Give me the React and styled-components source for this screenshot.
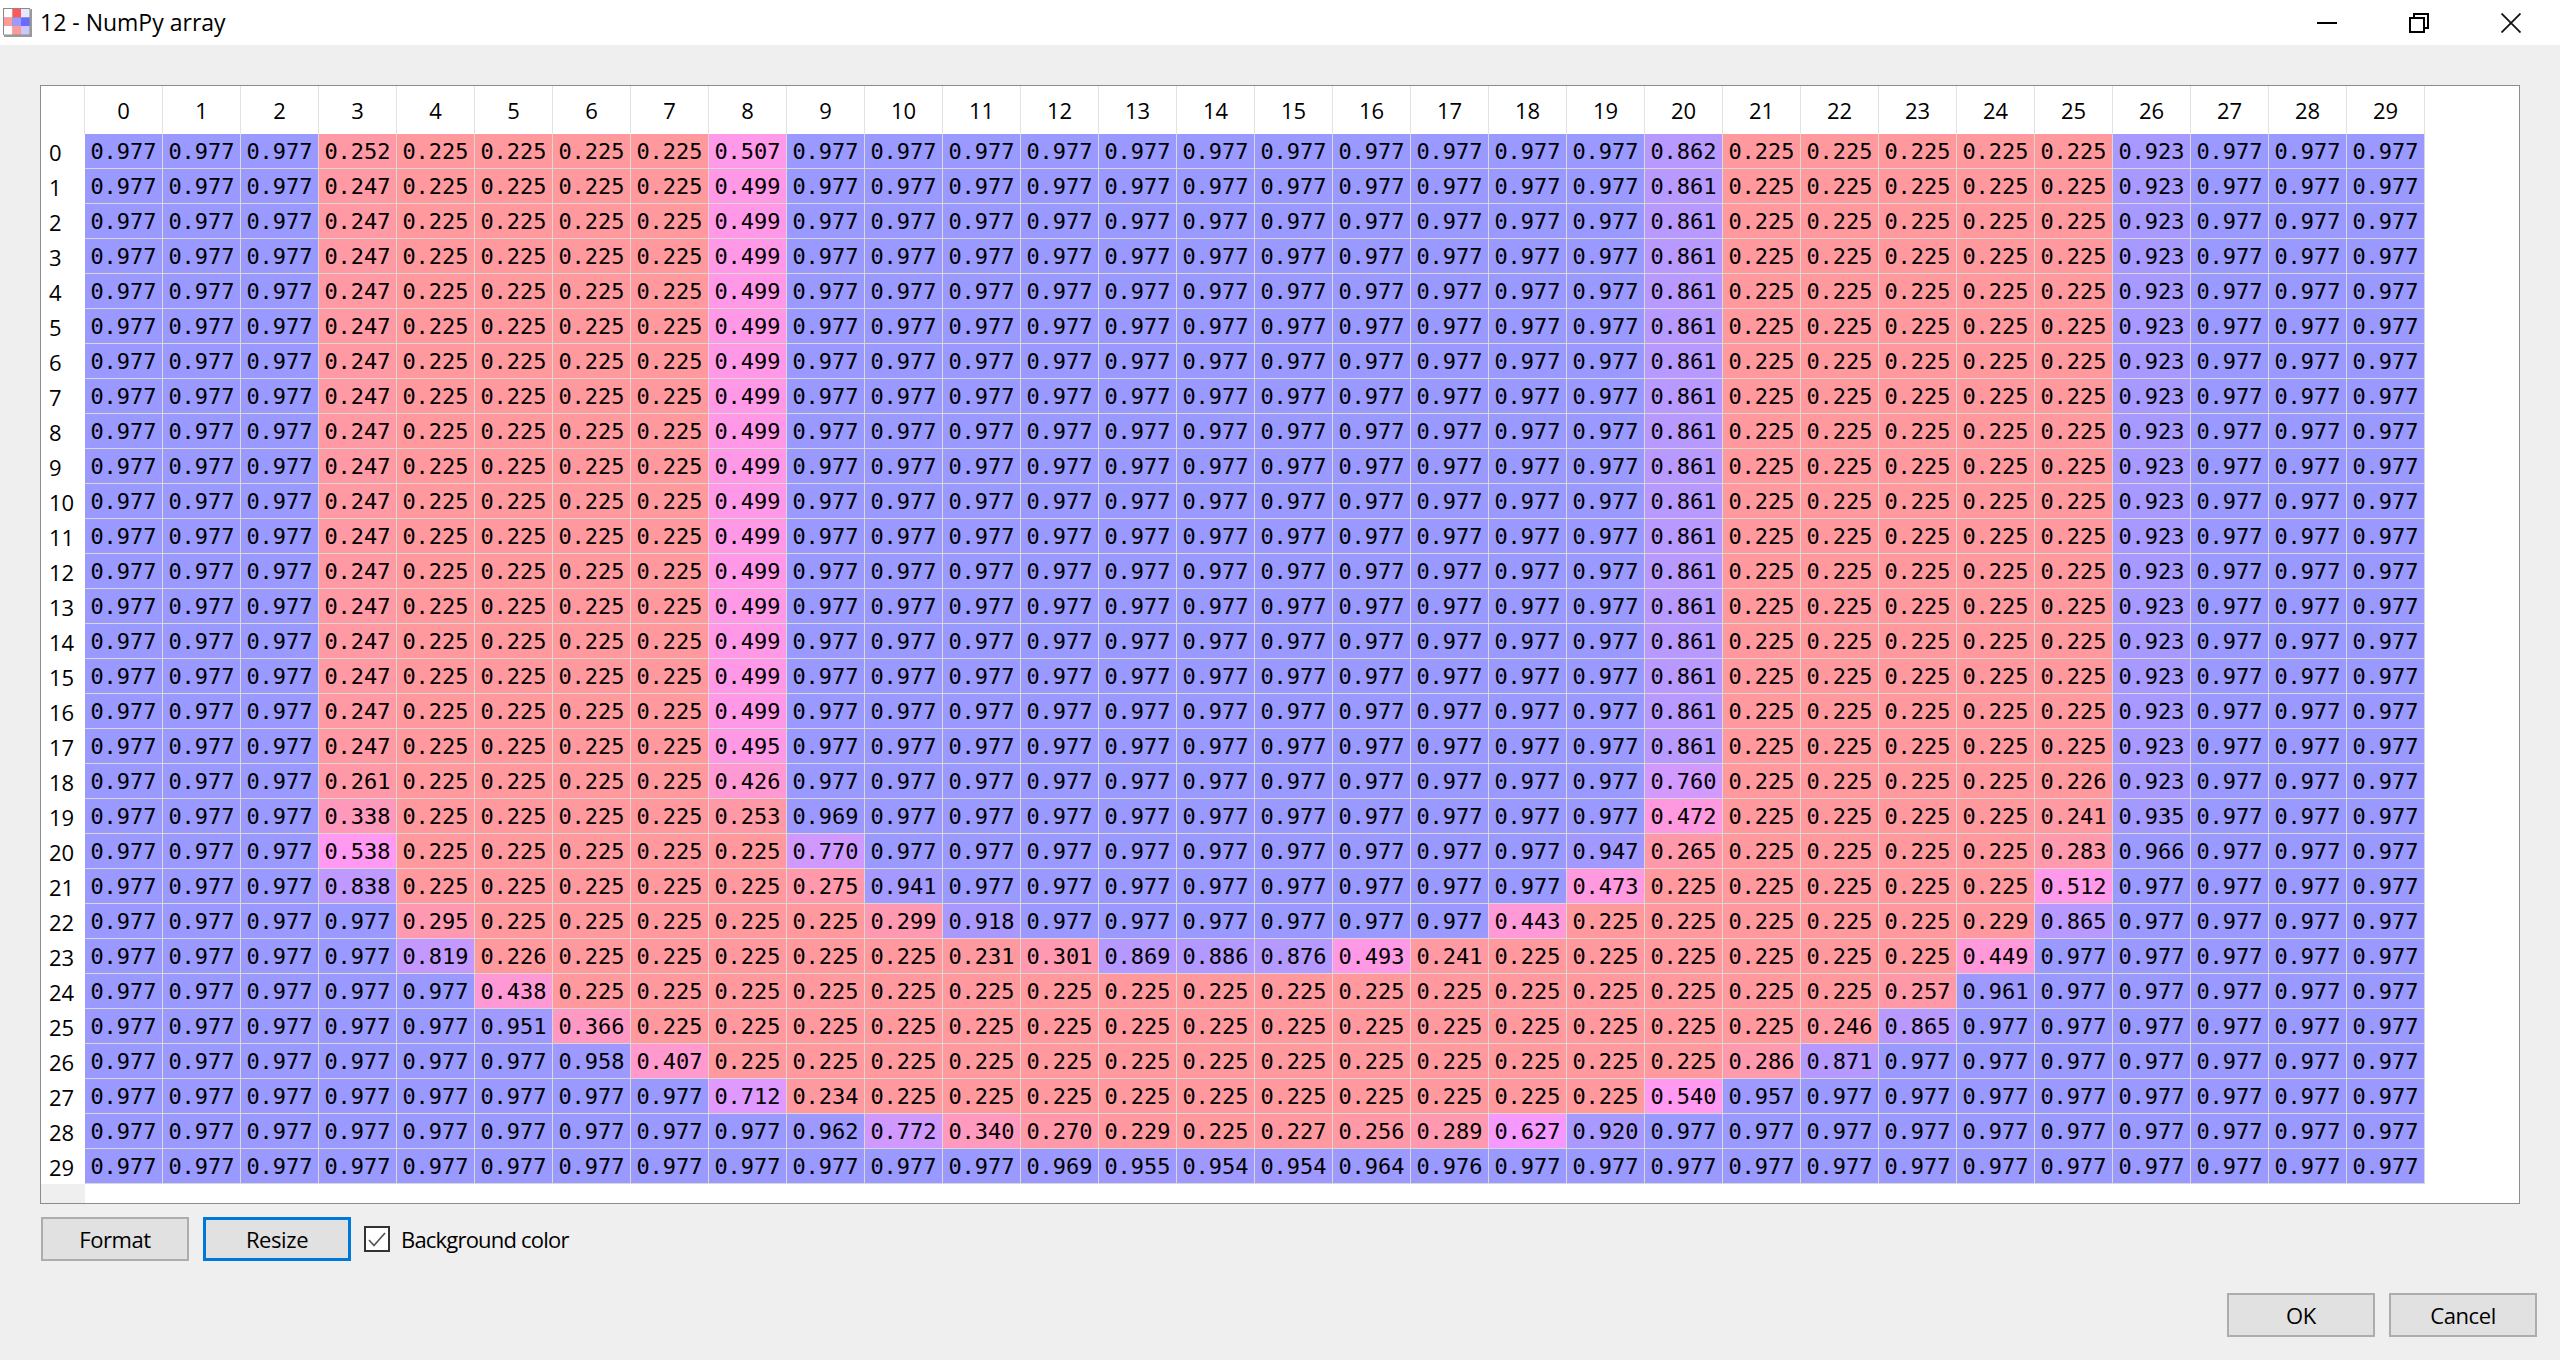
import React from "react";
import styled, { createGlobalStyle } from "styled-components";

// each row as "value*count" runs, values are thousandths
const ROWS_SOURCE = [
  "977*3 252 225*4 507 977*11 862 225*5 923 977*3",
  ...Array(16).fill("977*3 247 225*4 499 977*11 861 225*5 923 977*3"),
  "977*3 247 225*4 495 977*11 861 225*5 923 977*3",
  "977*3 261 225*4 426 977*11 760 225*4 226 923 977*3",
  "977*3 338 225*4 253 969 977*10 472 225*4 241 935 977*3",
  "977*3 538 225*5 770 977*9 947 265 225*4 283 966 977*3",
  "977*3 838 225*5 275 941 977*8 473 225*5 512 977*4",
  "977*4 295 225*5 299 918 977*6 443 225*5 229 865 977*4",
  "977*4 819 226 225*5 231 301 869 886 876 493 241 225*6 449 977*5",
  "977*5 438 225*17 257 961 977*5",
  "977*5 951 366 225*15 246 865 977*6",
  "977*6 958 407 225*13 286 871 977*7",
  "977*8 712 234 225*10 540 957 977*8",
  "977*9 962 772 340 270 229 225 227 256 289 627 920 977*10",
  "977*12 969 955 954 954 964 976 977*12",
];

const rows = ROWS_SOURCE.map((src) =>
  src.split(" ").flatMap((run) => {
    const [value, count = 1] = run.split("*");
    return Array(Number(count)).fill(Number(value));
  })
);

const columns = Array.from({ length: 30 }, (_, i) => i);

const GlobalStyle = createGlobalStyle`
  html, body {
    margin: 0;
    padding: 0;
    background: #efefef;
  }
  * {
    box-sizing: border-box;
  }
`;

const Window = styled.div`
  width: 2560px;
  height: 1360px;
  display: flex;
  flex-direction: column;
  overflow: hidden;
  font-family: "Open Sans", "Noto Sans", sans-serif;
  color: #000;
`;

const TitleBar = styled.div`
  height: 45px;
  flex: none;
  display: flex;
  align-items: center;
  background: #fff;
  padding: 0 3px;
`;

const Title = styled.div`
  flex: 1;
  margin-left: 8px;
  font-size: 23px;
  line-height: 45px;
`;

const WindowButton = styled.div`
  width: 92px;
  height: 45px;
  display: flex;
  align-items: center;
  justify-content: center;
`;

const Dialog = styled.div`
  flex: 1;
  min-height: 0;
  display: flex;
  flex-direction: column;
  padding: 40px 23px 23px 40px;
`;

const Frame = styled.div`
  height: 1119px;
  margin-right: 17px;
  display: flex;
  flex-direction: column;
  background: #fff;
  border: 1px solid #8c8c8c;
`;

const Table = styled.div`
  display: grid;
  grid-template-columns: 44px repeat(30, 78px);
  grid-template-rows: 48px repeat(30, 35px);
  font-size: 22px;
`;

const CornerHeader = styled.div`
  border-right: 1px solid #e3e3e3;
`;

const ColumnHeader = styled.div`
  display: flex;
  align-items: center;
  justify-content: center;
  border-right: 1px solid #e3e3e3;
`;

const RowHeader = styled.div`
  display: flex;
  align-items: center;
  padding-left: 8px;
`;

const Cell = styled.div`
  display: flex;
  align-items: center;
  justify-content: center;
  padding-top: 1px;
  background: ${({ $value }) =>
    `hsl(${240 + (117 * (977 - $value)) / 752}, 100%, 80%)`};
  border-right: 1px solid #d9d9d2;
  border-bottom: 1px solid #d9d9d2;
  font-family: "DejaVu Sans Mono", monospace;
  font-size: 22px;
`;

const FrameTail = styled.div`
  flex: 1;
`;

const TailStub = styled.div`
  width: 44px;
  height: 100%;
  background: #efefef;
`;

const Toolbar = styled.div`
  display: flex;
  align-items: center;
  margin-top: 13px;
  padding-left: 1px;
`;

const Button = styled.div`
  width: 148px;
  height: 44px;
  display: flex;
  align-items: center;
  justify-content: center;
  background: #e1e1e1;
  border: ${({ $focused }) =>
    $focused ? "3px solid #0078d7" : "2px solid #adadad"};
  font-size: 22px;
  letter-spacing: -0.4px;
`;

const ResizeButton = styled(Button)`
  margin-left: 14px;
`;

const CheckLabel = styled.label`
  display: flex;
  align-items: center;
  gap: 11px;
  margin-left: 13px;
  font-size: 22px;
  letter-spacing: -0.8px;
`;

const CheckBox = styled.span`
  width: 26px;
  height: 26px;
  display: flex;
  align-items: center;
  justify-content: center;
  background: #fff;
  border: 2px solid #333;
`;

const Footer = styled.div`
  display: flex;
  justify-content: flex-end;
  gap: 14px;
  margin-top: auto;
`;

function TableIcon() {
  const colors = [
    "#ffffff", "#ff5858", "#e6e6ff",
    "#ff9a9a", "#9a9aff", "#6a6aff",
    "#ffffff", "#ff9a9a", "#c8c8ff",
  ];
  return (
    <svg width="29" height="29" viewBox="0 0 29 29">
      <rect x="1" y="1" width="28" height="28" fill="#9a9a9a" />
      <rect x="0" y="0" width="27" height="27" fill="#8a8a8a" />
      {colors.map((color, i) => (
        <rect
          key={i}
          x={1 + (i % 3) * 8.5}
          y={1 + Math.floor(i / 3) * 8.5}
          width="8.5"
          height="8.5"
          fill={color}
        />
      ))}
    </svg>
  );
}

function MinimizeIcon() {
  return (
    <svg width="20" height="20" viewBox="0 0 20 20">
      <rect x="0" y="9" width="20" height="2" fill="#000" />
    </svg>
  );
}

function RestoreIcon() {
  return (
    <svg width="20" height="20" viewBox="0 0 20 20" fill="none" stroke="#000" strokeWidth="2">
      <rect x="1" y="5" width="14" height="14" />
      <path d="M5 5V1H19V15H15" />
    </svg>
  );
}

function CloseIcon() {
  return (
    <svg width="20" height="20" viewBox="0 0 20 20" fill="none" stroke="#111" strokeWidth="1.8">
      <path d="M0.5 0.5L19.5 19.5M19.5 0.5L0.5 19.5" />
    </svg>
  );
}

function CheckIcon() {
  return (
    <svg width="18" height="15" viewBox="0 0 18 15" fill="none" stroke="#555" strokeWidth="1.7">
      <path d="M1 8L6 13.5L17 1" />
    </svg>
  );
}

export default function App() {
  return (
    <>
      <GlobalStyle />
      <Window>
        <TitleBar>
          <TableIcon />
          <Title>12 - NumPy array</Title>
          <WindowButton>
            <MinimizeIcon />
          </WindowButton>
          <WindowButton>
            <RestoreIcon />
          </WindowButton>
          <WindowButton>
            <CloseIcon />
          </WindowButton>
        </TitleBar>
        <Dialog>
          <Frame>
            <Table>
              <CornerHeader />
              {columns.map((col) => (
                <ColumnHeader key={col}>{col}</ColumnHeader>
              ))}
              {rows.map((row, r) => (
                <React.Fragment key={r}>
                  <RowHeader>{r}</RowHeader>
                  {row.map((value, c) => (
                    <Cell key={c} $value={value}>
                      {(value / 1000).toFixed(3)}
                    </Cell>
                  ))}
                </React.Fragment>
              ))}
            </Table>
            <FrameTail>
              <TailStub />
            </FrameTail>
          </Frame>
          <Toolbar>
            <Button>Format</Button>
            <ResizeButton $focused>Resize</ResizeButton>
            <CheckLabel>
              <CheckBox>
                <CheckIcon />
              </CheckBox>
              Background color
            </CheckLabel>
          </Toolbar>
          <Footer>
            <Button>OK</Button>
            <Button>Cancel</Button>
          </Footer>
        </Dialog>
      </Window>
    </>
  );
}
